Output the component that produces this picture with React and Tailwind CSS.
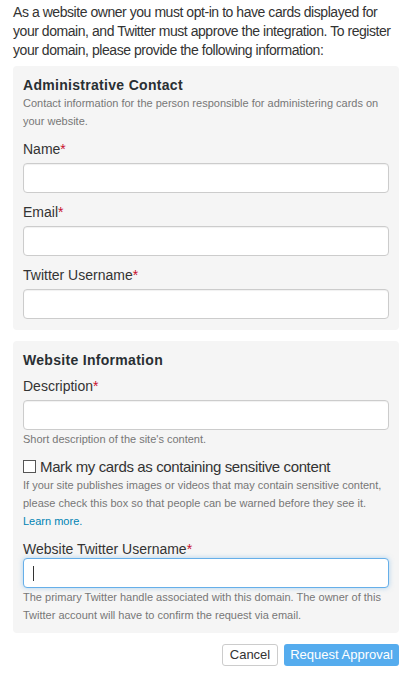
import React from 'react';

const Req = () => <span className="text-[#c8102e]">*</span>;

function Field({ label, className = '', focused = false }) {
    return (
        <div className={className}>
            <label className="block text-[14px] leading-[20px] text-[#333]">
                {label}
                <Req />
            </label>
            <div
                className={
                    focused
                        ? 'mt-[-1px] h-[30px] rounded-[4px] border border-[#66afe9] bg-white shadow-[0_0_5px_rgba(102,175,233,0.5)] flex items-center pl-[9px]'
                        : 'mt-[4px] h-[30px] rounded-[4px] border border-[#ccc] bg-white shadow-[inset_0_1px_1px_rgba(0,0,0,0.06)]'
                }
            >
                {focused && <span className="block w-px h-[15px] bg-[#333]"></span>}
            </div>
        </div>
    );
}

export default function App() {
    return (
        <div className="w-[413px] h-[683px] bg-white px-[13px] pt-[3px] font-['Liberation_Sans',Arial,sans-serif] text-[#333]">
            <p className="text-[14px] leading-[19px] tracking-[-0.45px] text-[#333]">
                As a website owner you must opt-in to have cards displayed for your domain, and Twitter must
                approve the integration. To register your domain, please provide the following information:
            </p>

            {/* Administrative contact panel */}
            <div className="mt-[6px] w-[386px] rounded-[4px] bg-[#f5f5f5] px-[10px] pt-[10px] pb-[11px]">
                <h3 className="text-[14px] leading-[18px] font-bold tracking-[0.3px] text-[#292f33]">Administrative Contact</h3>
                <p className="text-[11px] leading-[18px] text-[#777]">
                    Contact information for the person responsible for administering cards on your website.
                </p>
                <Field label="Name" className="mt-[9px]" />
                <Field label="Email" className="mt-[9px]" />
                <Field label="Twitter Username" className="mt-[9px]" />
            </div>

            {/* Website info panel */}
            <div className="mt-[11px] w-[386px] rounded-[4px] bg-[#f5f5f5] px-[10px] pt-[10px] pb-[9px]">
                <h3 className="text-[14px] leading-[18px] font-bold tracking-[0.3px] text-[#292f33]">Website Information</h3>
                <Field label="Description" className="mt-[7px]" />
                <p className="text-[11px] leading-[18px] text-[#777]">Short description of the site's content.</p>

                <label className="mt-[9px] flex items-center text-[15px] leading-[19px] tracking-[-0.37px] text-[#333]">
                    <span className="mr-[4px] inline-block h-[13px] w-[13px] border border-[#555] bg-white"></span>
                    Mark my cards as containing sensitive content
                </label>
                <p className="text-[11px] leading-[18px] text-[#777]">
                    If your site publishes images or videos that may contain sensitive content, please check this box
                    so that people can be warned before they see it.
                </p>
                <a className="block text-[11px] leading-[18px] text-[#0084b4]">Learn more.</a>

                <Field label="Website Twitter Username" className="mt-[9px]" focused />
                <p className="text-[11px] leading-[18px] text-[#777]">
                    The primary Twitter handle associated with this domain. The owner of this Twitter account will
                    have to confirm the request via email.
                </p>
            </div>

            <div className="mt-[11px] flex w-[386px] justify-end gap-[6px]">
                <button className="h-[22px] w-[56px] rounded-[3px] border border-[#ccc] bg-white text-[13px] leading-[20px] text-[#333]">
                    Cancel
                </button>
                <button className="h-[22px] w-[115px] rounded-[3px] bg-[#55acee] text-[13px] leading-[20px] text-white">
                    Request Approval
                </button>
            </div>
        </div>
    );
}
